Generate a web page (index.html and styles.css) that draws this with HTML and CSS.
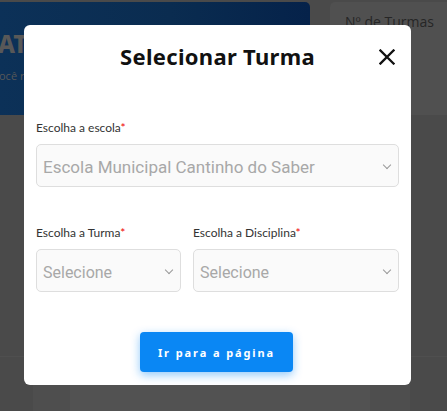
FILE: index.html
```html
<!DOCTYPE html>
<html lang="pt-BR">
<head>
    <meta charset="UTF-8">
    <meta name="viewport" content="width=device-width, initial-scale=1.0">
    <title>Selecionar Turma</title>
    <link rel="stylesheet" href="styles.css">
</head>
<body>
    <div class="page">
        <div class="topRow">
            <div class="banner">
                <h1>AT</h1>
                <p>ocê r</p>
            </div>
            <div class="statCard">Nº de Turmas</div>
        </div>
        <div class="tableArea">
            <div class="col c1"></div>
            <div class="col c2"></div>
            <div class="col c3"></div>
            <div class="col c4"></div>
        </div>
    </div>

    <div class="overlay">
        <div class="modal">
            <div class="modalHead">
                <h2>Selecionar Turma</h2>
                <button class="closeBtn" aria-label="Fechar">
                    <svg width="16" height="16" viewBox="0 0 16 16"><path d="M1.5 1.5 L14.5 14.5 M14.5 1.5 L1.5 14.5" stroke="#111" stroke-width="2.3" stroke-linecap="square"/></svg>
                </button>
            </div>

            <div class="field">
                <label>Escolha a escola<span class="req">*</span></label>
                <div class="select big">Escola Municipal Cantinho do Saber<span class="chev"></span></div>
            </div>

            <div class="fieldRow">
                <div class="field small">
                    <label>Escolha a Turma<span class="req">*</span></label>
                    <div class="select">Selecione<span class="chev"></span></div>
                </div>
                <div class="field wide">
                    <label>Escolha a Disciplina<span class="req">*</span></label>
                    <div class="select">Selecione<span class="chev"></span></div>
                </div>
            </div>

            <div class="actions">
                <button class="goBtn">Ir para a página</button>
            </div>
        </div>
    </div>
</body>
</html>
```

FILE: styles.css
```css
*{margin: 0; padding: 0; box-sizing: border-box;}
body{width: 447px; height: 411px; overflow: hidden; background-color: #4a4a4a; font-family: Lato, "Liberation Sans", sans-serif;}

/* page behind the modal (already darkened) */
.page{padding-top: 2px; height: 100%;}
.topRow{display: flex; height: 113px; gap: 20px;}
.banner{width: 310px; height: 100%; padding: 30px 0 0 0; background: linear-gradient(90deg, #0c3158 0%, #0a2c50 55%, #05224a 100%); border-radius: 0 5px 5px 0; color: #585858;}
.banner h1{font-family: "Noto Sans", sans-serif; font-size: 24px; font-weight: 800; line-height: 24px; margin-left: -2px;}
.banner p{font-family: "Open Sans", sans-serif; font-size: 11px; margin-top: 12px; margin-left: -1px;}
.statCard{flex: 1; background-color: #505050; border-radius: 5px 0 0 5px; color: #262626; font-size: 14px; padding: 10px 0 0 15px; font-family: "Open Sans", sans-serif;}
.tableArea{display: flex; margin-top: 241px; height: 60px; border-top: 1px solid #4f4f4f;}
.col{height: 100%;}
.c1{width: 33px; background-color: #4a4a4a;}
.c2{width: 37px; background-color: #4e4e4e;}
.c3{width: 300px; background-color: #525252;}
.c4{width: 40px; background-color: #4e4e4e;}

/* modal */
.overlay{position: fixed; inset: 0; padding: 25px 0 0 24px;}
.modal{width: 387px; height: 360px; background-color: #fff; border-radius: 6px; padding: 13px 12px 0 12px;}
.modalHead{position: relative; height: 36px; display: flex; align-items: center; justify-content: center;}
.modalHead h2{font-family: "Noto Sans", sans-serif; font-size: 22px; font-weight: 700; color: #111; letter-spacing: 0.3px;}
.closeBtn{position: absolute; right: 4px; top: 11px; border: none; background: none; width: 16px; height: 16px; display: flex;}

.field{display: flex; flex-direction: column;}
.field label{font-size: 12px; color: #333; height: 15px; margin-bottom: 9px;}
.req{color: #e00;}
.modal > .field{margin-top: 46px;}
.select{position: relative; height: 43px; border: 1px solid #dedede; border-radius: 5px; background-color: #fafafa; color: #a8a8a8; font-family: Roboto, sans-serif; font-size: 16px; line-height: 41px; padding: 2px 0 0 6px;}
.select.big{font-size: 17px;}
.chev{position: absolute; right: 8px; top: 17px; width: 6px; height: 6px; border-right: 1px solid #999; border-bottom: 1px solid #999; transform: rotate(45deg);}
.fieldRow{display: flex; gap: 12px; margin-top: 38px;}
.small{width: 145px;}
.wide{flex: 1;}

.actions{display: flex; justify-content: center; margin-top: 40px;}
.goBtn{width: 153px; height: 40px; margin-right: 2px; border: none; border-radius: 4px; background-color: #0a87f4; color: #fff; font-family: "Noto Sans", sans-serif; font-size: 11px; font-weight: 700; letter-spacing: 1.9px; box-shadow: 0 3px 10px rgba(10,135,244,.45);}
```
